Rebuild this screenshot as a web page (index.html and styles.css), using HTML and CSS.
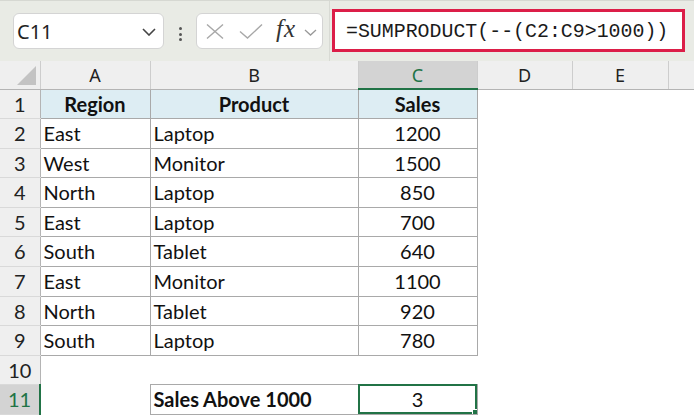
FILE: index.html
```html
<!DOCTYPE html>
<html>
<head>
<meta charset="utf-8">
<link rel="stylesheet" href="styles.css">
</head>
<body>
<div class="toolbar">
  <div class="namebox">
    <span class="nb-text">C11</span>
    <svg class="chev" width="14" height="8" viewBox="0 0 14 8"><path d="M1 1 L7 7 L13 1" fill="none" stroke="#444" stroke-width="1.6"/></svg>
  </div>
  <div class="dots"><i></i><i></i><i></i></div>
  <div class="fxbox">
    <svg class="ico-x" width="18" height="15" viewBox="0 0 18 15"><path d="M1 0.5 L17 14.5 M17 0.5 L1 14.5" stroke="#a8a8a8" stroke-width="1.4" fill="none"/></svg>
    <svg class="ico-check" width="24" height="15" viewBox="0 0 24 15"><path d="M1 7.5 L8.5 14 L23 0.5" stroke="#a8a8a8" stroke-width="1.4" fill="none"/></svg>
    <span class="fx">fx</span>
    <svg class="chev2" width="13" height="7" viewBox="0 0 13 7"><path d="M1 1 L6.5 6 L12 1" fill="none" stroke="#999" stroke-width="1.3"/></svg>
  </div>
  <div class="sep"></div>
  <div class="formula">=SUMPRODUCT(--(C2:C9&gt;1000))</div>
</div>
<table class="grid">
  <colgroup>
    <col class="w-rh"><col class="w-a"><col class="w-b"><col class="w-c"><col class="w-d"><col class="w-e"><col class="w-f">
  </colgroup>
  <thead>
    <tr class="colhead">
      <th class="corner"><span class="tri"></span></th>
      <th>A</th><th>B</th><th class="sel">C</th><th>D</th><th>E</th><th></th>
    </tr>
  </thead>
  <tbody>
    <tr class="h29"><th>1</th><td class="t hd">Region</td><td class="t hd">Product</td><td class="t hd">Sales</td><td></td><td></td><td></td></tr>
    <tr class="h30"><th>2</th><td class="t">East</td><td class="t">Laptop</td><td class="t num">1200</td><td></td><td></td><td></td></tr>
    <tr class="h29"><th>3</th><td class="t">West</td><td class="t">Monitor</td><td class="t num">1500</td><td></td><td></td><td></td></tr>
    <tr class="h30"><th>4</th><td class="t">North</td><td class="t">Laptop</td><td class="t num">850</td><td></td><td></td><td></td></tr>
    <tr class="h29"><th>5</th><td class="t">East</td><td class="t">Laptop</td><td class="t num">700</td><td></td><td></td><td></td></tr>
    <tr class="h30"><th>6</th><td class="t">South</td><td class="t">Tablet</td><td class="t num">640</td><td></td><td></td><td></td></tr>
    <tr class="h30"><th>7</th><td class="t">East</td><td class="t">Monitor</td><td class="t num">1100</td><td></td><td></td><td></td></tr>
    <tr class="h29"><th>8</th><td class="t">North</td><td class="t">Tablet</td><td class="t num">920</td><td></td><td></td><td></td></tr>
    <tr class="h30"><th>9</th><td class="t">South</td><td class="t">Laptop</td><td class="t num">780</td><td></td><td></td><td></td></tr>
    <tr class="h29"><th>10</th><td></td><td></td><td></td><td></td><td></td><td></td></tr>
    <tr class="h30"><th class="selrow">11</th><td></td><td class="t bold">Sales Above 1000</td><td class="t num active">3<span class="handle"></span></td><td></td><td></td><td></td></tr>
  </tbody>
</table>
</body>
</html>
```
FILE: styles.css
```css
html, body {
  margin: 0;
  padding: 0;
  background: #ffffff;
  overflow: hidden;
}
body {
  width: 694px;
  height: 418px;
  font-family: Lato, "Noto Sans", sans-serif;
  color: #111;
}
.toolbar {
  position: relative;
  height: 61px;
  background: #e9ebe5;
  border-top: 1px solid #d6d8d2;
  box-sizing: border-box;
  display: flex;
  align-items: flex-start;
}
.namebox {
  margin: 12px 0 0 13px;
  width: 151px;
  height: 36px;
  box-sizing: border-box;
  background: #fff;
  border: 1px solid #d4d4d4;
  border-radius: 6px;
  display: flex;
  align-items: center;
  justify-content: space-between;
  padding: 0 7px 0 3px;
}
.nb-text {
  font-family: "Noto Sans", "Open Sans", sans-serif;
  font-size: 20px;
  color: #222;
}
.chev { display: block; margin-top: 2px; }
.dots {
  margin: 26px 0 0 0;
  width: 32px;
  display: flex;
  flex-direction: column;
  align-items: center;
  gap: 2.5px;
}
.dots i {
  display: block;
  width: 3px;
  height: 3px;
  border-radius: 50%;
  background: #555;
}
.fxbox {
  margin-top: 12px;
  width: 127px;
  height: 36px;
  box-sizing: border-box;
  background: #fff;
  border: 1px solid #d4d4d4;
  border-radius: 6px;
  display: flex;
  align-items: center;
  padding-left: 9px;
}
.ico-x { display: block; margin-right: 15px; }
.ico-check { display: block; margin-right: 13px; }
.fx {
  font-family: "Liberation Serif", "DejaVu Serif", serif;
  font-style: italic;
  font-size: 25px;
  color: #333;
  margin-top: -5px;
  margin-right: 8px;
  letter-spacing: 1px;
}
.chev2 { display: block; margin-top: 2px; }
.sep {
  width: 1px;
  height: 60px;
  margin-left: 6px;
  background: #d8dad4;
}
.formula {
  margin: 8px 0 0 2px;
  width: 353px;
  height: 43px;
  box-sizing: border-box;
  border: 3px solid #dc1e48;
  background: #fff;
  font-family: "Liberation Mono", "DejaVu Sans Mono", monospace;
  font-size: 19.9px;
  line-height: 39px;
  padding-left: 11px;
  color: #1a1a1a;
  white-space: nowrap;
}
.grid {
  border-collapse: collapse;
  table-layout: fixed;
  width: 694px;
}
.w-rh { width: 40px; }
.w-a { width: 110px; }
.w-b { width: 208px; }
.w-c { width: 119px; }
.w-d { width: 95px; }
.w-e { width: 96px; }
.w-f { width: 26px; }
.grid th, .grid td {
  padding: 0;
  font-size: 20px;
  font-weight: normal;
  overflow: hidden;
  white-space: nowrap;
}
.colhead { height: 28px; }
.colhead th {
  background: #efefef;
  border-left: 1px solid #cdcdcd;
  border-bottom: 1px solid #b4b4b4;
  text-align: center;
  font-family: "Noto Sans", "Open Sans", sans-serif;
  font-size: 18px;
  color: #222;
}
.colhead th.corner {
  border-left: none;
  position: relative;
}
.tri {
  position: absolute;
  right: 4px;
  bottom: 4px;
  width: 0;
  height: 0;
  border-left: 19px solid transparent;
  border-bottom: 19px solid #c3c3c3;
}
.colhead th.sel {
  background: #d3d3d3;
  color: #217346;
  border-bottom: 2px solid #217346;
}
tbody th {
  background: #efefef;
  border-right: 1px solid #b4b4b4;
  border-bottom: 1px solid #d9d9d9;
  text-align: center;
  color: #222;
}
tbody th.selrow {
  background: #d3d3d3;
  color: #217346;
  border-right: 2px solid #217346;
}
.h29 { height: 29px; }
.h30 { height: 30px; }
td.t {
  border: 1px solid #a9a9a9;
  padding: 0 3px;
  color: #111;
}
td.hd {
  background: #ddedf3;
  font-weight: bold;
  text-align: center;
}
td.bold { font-weight: bold; }
td.num { text-align: center; }
td.active {
  position: relative;
  outline: 2px solid #217346;
  outline-offset: -2px;
}
.handle {
  position: absolute;
  right: -3px;
  bottom: -3px;
  width: 6px;
  height: 6px;
  background: #217346;
  border: 1px solid #fff;
}
```
